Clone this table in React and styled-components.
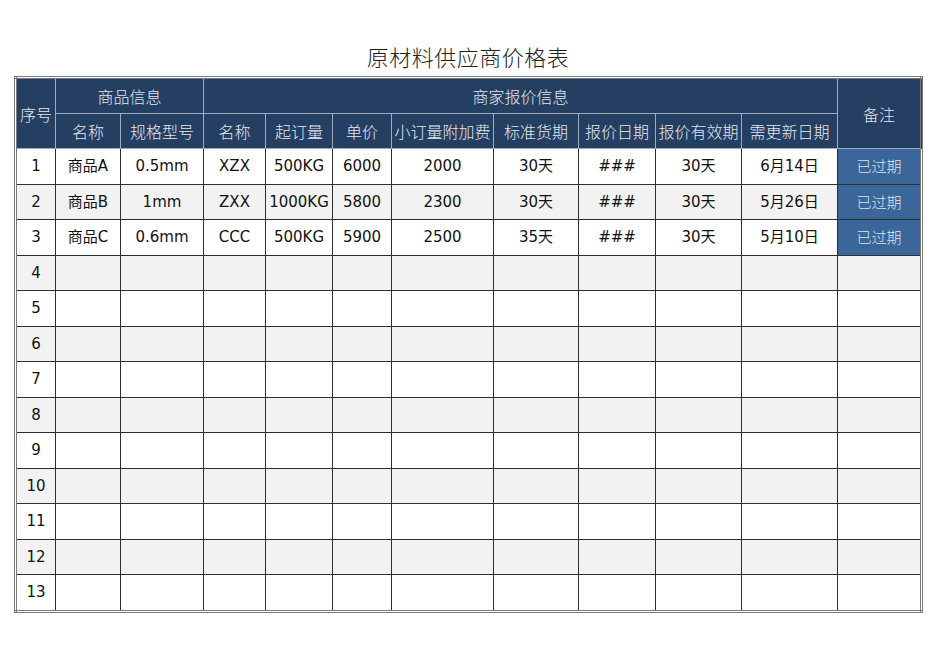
import React from 'react';
import styled, { createGlobalStyle } from 'styled-components';

const GlobalStyle = createGlobalStyle`
  body {
    margin: 0;
    background: #ffffff;
    font-family: 'DejaVu Sans', 'Noto Sans CJK SC', sans-serif;
  }
`;

const Page = styled.div`
  width: 950px;
  height: 672px;
  padding: 42px 0 0 14px;
  box-sizing: border-box;
`;

const Title = styled.h1`
  width: 908px;
  margin: 0 0 5px;
  text-align: center;
  font-family: 'Noto Sans CJK SC', sans-serif;
  font-weight: 300;
  font-size: 22px;
  line-height: 29px;
  color: #1f1f1f;
  letter-spacing: 0.5px;
`;

const Sheet = styled.table`
  width: 906px;
  table-layout: fixed;
  border-collapse: collapse;
  border: 3px double #7a7a7a;
`;

const HeadCell = styled.th`
  height: 34px;
  padding: 0;
  background: #253f63;
  color: #e3e8ef;
  font-family: 'Noto Sans CJK SC', sans-serif;
  font-weight: 300;
  font-size: 16px;
  line-height: 18px;
  text-align: center;
  vertical-align: middle;
  border: 1px solid #9eacbf;
  white-space: nowrap;
`;

const Row = styled.tr`
  background: ${p => (p.$shaded ? '#f2f2f2' : '#ffffff')};
`;

const Cell = styled.td`
  height: 34.5px;
  padding: 0;
  text-align: center;
  vertical-align: middle;
  font-size: 15px;
  line-height: 18px;
  color: #111;
  border: 1px solid #2e2e2e;
  white-space: nowrap;
  overflow: hidden;
`;

const Remark = styled(Cell)`
  background: ${p => (p.$filled ? '#3a6699' : 'transparent')};
  color: #dde4ee;
  font-family: 'Noto Sans CJK SC', sans-serif;
  font-weight: 300;
  font-size: 15px;
`;

const widths = [40, 65, 83, 62, 67, 59, 102, 85, 77, 86, 96, 84];

const data = [
  ['1', '商品A', '0.5mm', 'XZX', '500KG', '6000', '2000', '30天', '###', '30天', '6月14日', '已过期'],
  ['2', '商品B', '1mm', 'ZXX', '1000KG', '5800', '2300', '30天', '###', '30天', '5月26日', '已过期'],
  ['3', '商品C', '0.6mm', 'CCC', '500KG', '5900', '2500', '35天', '###', '30天', '5月10日', '已过期'],
];

const rows = Array.from({ length: 13 }, (_, i) =>
  data[i] || [String(i + 1), '', '', '', '', '', '', '', '', '', '', '']
);

const subHeads = ['名称', '规格型号', '名称', '起订量', '单价', '小订量附加费', '标准货期', '报价日期', '报价有效期', '需更新日期'];

export default function App() {
  return (
    <Page>
      <GlobalStyle />
      <Title>原材料供应商价格表</Title>
      <Sheet>
        <colgroup>
          {widths.map((w, i) => (
            <col key={i} style={{ width: w }} />
          ))}
        </colgroup>
        <thead>
          <tr>
            <HeadCell rowSpan={2}>序号</HeadCell>
            <HeadCell colSpan={2}>商品信息</HeadCell>
            <HeadCell colSpan={8}>商家报价信息</HeadCell>
            <HeadCell rowSpan={2}>备注</HeadCell>
          </tr>
          <tr>
            {subHeads.map((h, i) => (
              <HeadCell key={i}>{h}</HeadCell>
            ))}
          </tr>
        </thead>
        <tbody>
          {rows.map((r, i) => (
            <Row key={i} $shaded={i % 2 === 1}>
              {r.slice(0, 11).map((v, j) => (
                <Cell key={j}>{v}</Cell>
              ))}
              <Remark $filled={!!r[11]}>{r[11]}</Remark>
            </Row>
          ))}
        </tbody>
      </Sheet>
    </Page>
  );
}
